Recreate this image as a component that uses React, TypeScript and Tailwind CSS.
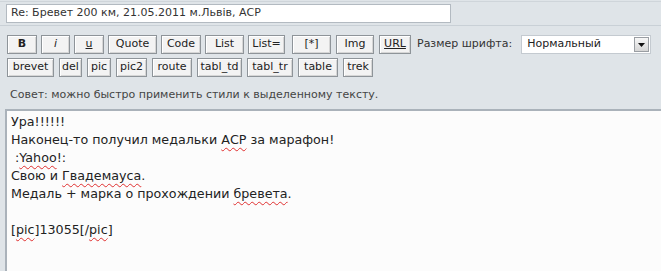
import React from "react";

const row1 = [
  { label: "B", w: "w-[30px]", m: "ml-0", cls: "font-bold" },
  { label: "i", w: "w-[29px]", m: "ml-[4px]", cls: "italic" },
  { label: "u", w: "w-[30px]", m: "ml-[4px]", cls: "underline" },
  { label: "Quote", w: "w-[49px]", m: "ml-[4px]", cls: "" },
  { label: "Code", w: "w-[40px]", m: "ml-[4px]", cls: "" },
  { label: "List", w: "w-[39px]", m: "ml-[4px]", cls: "" },
  { label: "List=", w: "w-[37px]", m: "ml-[4px]", cls: "" },
  { label: "[*]", w: "w-[39px]", m: "ml-[7px]", cls: "" },
  { label: "Img", w: "w-[38px]", m: "ml-[5px]", cls: "" },
  { label: "URL", w: "w-[32px]", m: "ml-[5px]", cls: "underline" },
];

const row2 = [
  { label: "brevet", w: "w-[47px]" },
  { label: "del", w: "w-[23px]" },
  { label: "pic", w: "w-[24px]" },
  { label: "pic2", w: "w-[31px]" },
  { label: "route", w: "w-[40px]" },
  { label: "tabl_td", w: "w-[45px]" },
  { label: "tabl_tr", w: "w-[46px]" },
  { label: "table", w: "w-[40px]" },
  { label: "trek", w: "w-[30px]" },
];

function Btn({ label, w, cls = "" }: { label: string; w: string; cls?: string }) {
  return (
    <div
      className={`${w} h-[19px] shrink-0 flex items-center justify-center border border-[#8e9499] bg-[#f3f3f3] shadow-[inset_1px_1px_0_#ffffff,inset_-1px_-1px_0_#d6d6d6] text-[11px] text-[#222] ${cls}`}
    >
      {label}
    </div>
  );
}

function Err({ children }: { children: React.ReactNode }) {
  return (
    <span className="underline decoration-wavy decoration-[#e03030] decoration-1 underline-offset-[3px]">
      {children}
    </span>
  );
}

export default function App() {
  return (
    <div className="w-[661px] h-[271px] overflow-hidden bg-[#dfe4e8] font-['DejaVu_Sans',Verdana,sans-serif] text-[#333]">
      <div className="h-px bg-[#cfd5da] mt-px" />
      {/* заголовок */}
      <div className="pl-[6px] pt-[2px]">
        <div className="w-[445px] h-[19px] border border-[#b3bac1] bg-white px-[4px] flex items-center text-[11px] text-[#333] whitespace-nowrap">
          Re: Бревет 200 км, 21.05.2011 м.Львів, АСР
        </div>
      </div>
      <div className="h-px bg-[#c9d0d6] mt-[2px]" />

      {/* панель кнопок */}
      <div className="pl-[7px] pt-[9px] flex items-center">
        {row1.map((b) => (
          <div key={b.label} className={b.m}>
            <Btn label={b.label} w={b.w} cls={b.cls} />
          </div>
        ))}
        <span className="text-[11px] text-[#333] ml-[6px] whitespace-nowrap">Размер шрифта:</span>
        <div className="ml-[9px] w-[130px] h-[19px] border border-[#c4cad0] bg-white flex items-center">
          <span className="flex-1 text-[11px] text-[#222] pl-[5px]">Нормальный</span>
          <div className="w-[15px] h-[15px] mr-[1px] border border-[#9a9ea3] bg-gradient-to-b from-[#f7f7f7] to-[#d5d5d5] flex items-center justify-center">
            <svg width="7" height="4" viewBox="0 0 7 4">
              <path d="M0 0h7L3.5 4z" fill="#111" />
            </svg>
          </div>
        </div>
      </div>
      <div className="pl-[7px] pt-[4px] flex items-center gap-[5px]">
        {row2.map((b) => (
          <Btn key={b.label} label={b.label} w={b.w} />
        ))}
      </div>

      <div className="pl-[10px] pt-[10px] h-[32px] text-[11px] text-[#444]">
        Совет: можно быстро применить стили к выделенному тексту.
      </div>

      {/* текст сообщения */}
      <div className="ml-[5px] h-[200px] border-l-2 border-t-2 border-[#aab2ba] bg-[#fcfcfc] pl-[4px] pt-[2px] text-[12.7px] leading-[18px] text-[#222] whitespace-pre">
        <div>Ура!!!!!!</div>
        <div>
          Наконец-то получил медальки <Err>АСР</Err> за марафон!
        </div>
        <div>
          {" :"}
          <Err>Yahoo</Err>!:
        </div>
        <div>
          Свою и <Err>Гвадемауса</Err>.
        </div>
        <div>
          Медаль + марка о прохождении <Err>бревета</Err>.
        </div>
        <div>&nbsp;</div>
        <div>
          [<Err>pic</Err>]13055[/<Err>pic</Err>]
        </div>
      </div>
    </div>
  );
}
